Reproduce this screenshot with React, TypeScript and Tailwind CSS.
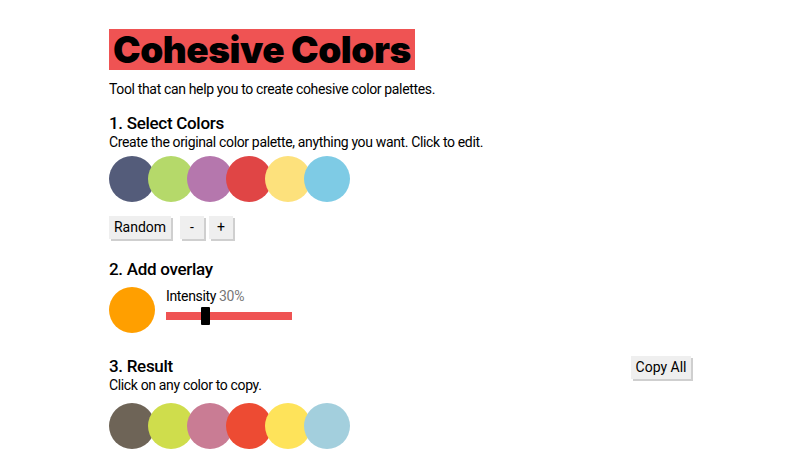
const original = ['#545c7a', '#b5d96a', '#b577ad', '#e04545', '#fde17c', '#7ecbe5'];
const result = ['#6e6457', '#cfdd4c', '#c97c94', '#ed4b33', '#fee35a', '#a3cfdd'];

const Swatches = ({ colors }: { colors: string[] }) => (
  <div className="flex">
    {colors.map((c, i) => (
      <div
        key={c}
        className={`w-[46px] h-[46px] rounded-full shrink-0 ${i > 0 ? '-ml-[7px]' : ''}`}
        style={{ backgroundColor: c }}
      />
    ))}
  </div>
);

const Btn = ({ label, className = '' }: { label: string; className?: string }) => (
  <button
    className={`h-[23px] bg-[#efefef] text-[14px] leading-[23px] text-black shadow-[2px_2px_0_#cfcfcf] ${className}`}
  >
    {label}
  </button>
);

export default function App() {
  const intensity = 30;
  return (
    <div className="min-h-[450px] bg-white font-['Roboto',sans-serif] text-black">
      <div className="mx-auto w-[582px] pt-[29px]">
        <h1 className="inline-block bg-[#ef5353] px-[4px] font-['Inter',sans-serif] text-[37px] font-black leading-[41px] tracking-[-0.5px]">
          Cohesive Colors
        </h1>
        <p className="mt-[9px] text-[14px] leading-5 tracking-[-0.35px]">
          Tool that can help you to create cohesive color palettes.
        </p>

        <h2 className="mt-[14px] text-[17px] font-medium leading-5 tracking-[-0.3px]">1. Select Colors</h2>
        <p className="text-[14px] leading-[18px] tracking-[-0.35px]">
          Create the original color palette, anything you want. Click to edit.
        </p>
        <div className="mt-[5px]">
          <Swatches colors={original} />
        </div>
        <div className="mt-[14px] flex">
          <Btn label="Random" className="w-[62px]" />
          <Btn label="-" className="ml-[9px] w-[24px]" />
          <Btn label="+" className="ml-[5px] w-[24px]" />
        </div>

        <h2 className="mt-[20px] text-[17px] font-medium leading-5 tracking-[-0.3px]">2. Add overlay</h2>
        <div className="mt-[8px] flex gap-[11px]">
          <div className="w-[46px] h-[46px] rounded-full bg-[#ff9f00]" />
          <div>
            <div className="text-[14px] leading-[18px] tracking-[-0.35px]">
              Intensity <span className="text-[#777777]">{intensity}%</span>
            </div>
            <div className="mt-[2px] flex h-[18px] w-[126px] items-center">
              <div className="relative h-[8px] w-full bg-[#ef5353]">
                <div className="absolute left-[35px] top-[-5px] h-[18px] w-[9px] rounded-[1px] bg-black" />
              </div>
            </div>
          </div>
        </div>

        <div className="mt-[23px] flex items-start justify-between">
          <div>
            <h2 className="text-[17px] font-medium leading-5 tracking-[-0.3px]">3. Result</h2>
            <p className="text-[14px] leading-[18px] tracking-[-0.35px]">Click on any color to copy.</p>
          </div>
          <Btn label="Copy All" className="w-[60px]" />
        </div>
        <div className="mt-[9px]">
          <Swatches colors={result} />
        </div>
      </div>
    </div>
  );
}
